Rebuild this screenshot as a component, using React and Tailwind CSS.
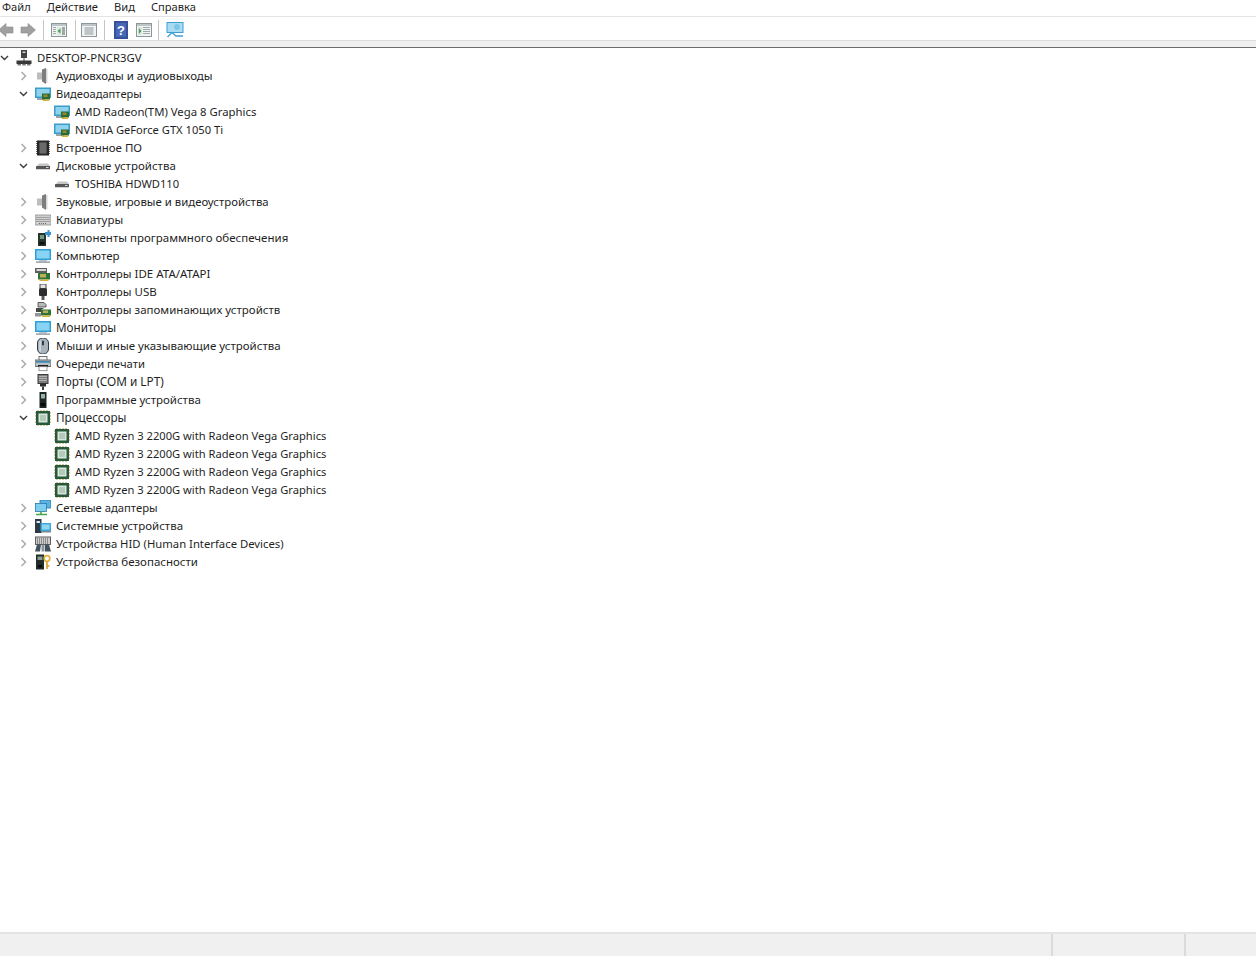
import React from "react";

const Chev = ({ open }) => (
  <svg width="10" height="10" viewBox="0 0 10 10" fill="none" stroke={open ? "#3c3c3c" : "#a6a6a6"} strokeWidth="1.4">
    {open ? <path d="M1 3 L4.5 6.5 L8 3" /> : <path d="M2.5 1 L6.5 5 L2.5 9" />}
  </svg>
);

const S = ({ children }) => <svg width="16" height="16" viewBox="0 0 16 16">{children}</svg>;

const Monitor = () => (
  <S>
    <rect x="0" y="1" width="16" height="11" fill="#2f9fd8" />
    <rect x="1.5" y="2.5" width="13" height="8" fill="#8ad4f3" />
    <rect x="4" y="12" width="8" height="1.5" fill="#b9c3c9" />
    <rect x="1" y="13.5" width="14" height="1.2" fill="#7c8990" />
  </S>
);
const Video = () => (
  <S>
    <rect x="0" y="1.5" width="16" height="10.5" fill="#3a9cc9" />
    <rect x="1.5" y="3" width="13" height="7.5" fill="#8fd2ee" />
    <rect x="2" y="12" width="8" height="2" fill="#9aa5ab" />
    <rect x="7" y="7.5" width="8" height="6" fill="#2d6b33" />
    <rect x="8.5" y="8.5" width="4" height="2.5" fill="#8f8a34" />
    <rect x="8" y="13.5" width="6" height="1.5" fill="#d9b233" />
  </S>
);
const Audio = () => (
  <S>
    <path d="M7 1.5 L11 0 V16 L7 13.5 Z" fill="#7d7d7d" />
    <path d="M2 4.5 H7 V11.5 H2 Z" fill="#bdbdbd" />
    <path d="M11 1 H12.5 V15 H11 Z" fill="#d6d6d6" />
  </S>
);
const Firmware = () => (
  <S>
    <rect x="2" y="0.5" width="12" height="15" fill="#262626" />
    <rect x="4.5" y="2.5" width="7" height="11" fill="#7b7b7b" />
    <path d="M4.5 4h7M4.5 6h7M4.5 8h7M4.5 10h7M4.5 12h7" stroke="#4c4c4c" strokeWidth=".7" />
    <path d="M1 1.5h1M1 3.5h1M1 5.5h1M1 7.5h1M1 9.5h1M1 11.5h1M1 13.5h1M14 1.5h1M14 3.5h1M14 5.5h1M14 7.5h1M14 9.5h1M14 11.5h1M14 13.5h1" stroke="#666" />
  </S>
);
const Disk = () => (
  <S>
    <path d="M2 8 L4 5.5 H13 L15 8 V11 H2 Z" fill="#c6c6c6" />
    <rect x="1" y="8" width="14" height="3.2" rx=".5" fill="#565656" />
    <rect x="11" y="9" width="2.5" height="1" fill="#d6d6d6" />
  </S>
);
const Keyboard = () => (
  <S>
    <rect x="0" y="3" width="16" height="10" fill="#cfcfcf" stroke="#8f8f8f" strokeWidth=".8" />
    <path d="M1.5 5.5h13M1.5 7.5h13M1.5 9.5h13M4 11.5h8" stroke="#707070" strokeDasharray="1 1" />
  </S>
);
const Software = () => (
  <S>
    <rect x="3" y="3" width="8" height="13" fill="#26352b" />
    <rect x="5" y="5" width="4" height="4" fill="#6f9a80" />
    <rect x="4.5" y="12" width="5" height="2.5" fill="#0d130f" />
    <path d="M10 2h2.5V0h2v2H16v3h-1.5v2h-2V5H10z" fill="#3a93cb" />
  </S>
);
const Ide = () => (
  <S>
    <rect x="0" y="2" width="12" height="5" fill="#5f5f5f" />
    <rect x="1.5" y="3" width="9.5" height="2" fill="#d8d8d8" />
    <rect x="3" y="7" width="12" height="6.5" fill="#2e7436" />
    <rect x="5" y="8" width="6" height="3.5" fill="#bcae5e" />
    <rect x="4.5" y="13.5" width="9" height="1.5" fill="#d9b233" />
  </S>
);
const Usb = () => (
  <S>
    <rect x="5" y="0" width="6" height="4.5" fill="#e3e3e3" stroke="#444" />
    <rect x="4" y="4.5" width="8" height="7.5" rx="1" fill="#2d2d2d" />
    <rect x="6.5" y="12" width="3" height="4" fill="#555" />
  </S>
);
const Storage = () => (
  <S>
    <path d="M3 0.5h6l2 2v2.5H3z" fill="#b8b8b8" stroke="#3f3f3f" strokeWidth=".8" />
    <path d="M1 6 H9 L6 8 H9 V10 H1 Z" fill="#454545" />
    <rect x="6" y="7.5" width="10" height="6" fill="#2e7436" />
    <rect x="8" y="8.5" width="5" height="2.5" fill="#bcae5e" />
    <rect x="7" y="13.5" width="8" height="1.5" fill="#d9b233" />
    <rect x="0" y="11" width="6" height="3.5" fill="#949494" />
  </S>
);
const Mouse = () => (
  <S>
    <rect x="2.5" y="0" width="11" height="16" rx="5" fill="#a8b3bb" stroke="#2f3a44" />
    <rect x="7" y="2.5" width="2" height="5" rx="1" fill="#303b44" />
    <rect x="4.5" y="2.5" width="1.2" height="11" fill="#e3e8eb" />
  </S>
);
const Printer = () => (
  <S>
    <rect x="4" y="0.5" width="8" height="4" fill="#f4f4f4" stroke="#555" strokeWidth=".8" />
    <rect x="0" y="4" width="16" height="6.5" fill="#b9bfc2" stroke="#505050" strokeWidth=".8" />
    <rect x="1" y="5" width="14" height="1.7" fill="#3a8abb" />
    <rect x="3" y="9" width="10" height="1.7" fill="#1f1f1f" />
    <rect x="4" y="10.7" width="8" height="4" fill="#fff" stroke="#808080" strokeWidth=".8" />
  </S>
);
const Port = () => (
  <S>
    <rect x="3" y="0.5" width="10" height="9" fill="#7d7d7d" stroke="#3d3d3d" />
    <path d="M4.5 2.5h7M4.5 4.5h7M4.5 6.5h7" stroke="#e8e8e8" strokeDasharray="1 1" />
    <rect x="5" y="9.5" width="6" height="3" fill="#2f2f2f" />
    <rect x="7" y="12.5" width="2" height="3.5" fill="#3f3f3f" />
  </S>
);
const Program = () => (
  <S>
    <rect x="4.5" y="0" width="7" height="16" fill="#1c2622" />
    <rect x="6" y="2" width="4" height="4.5" fill="#98b2a6" />
    <rect x="5.5" y="11" width="5" height="3" fill="#070a09" />
  </S>
);
const Cpu = () => (
  <S>
    <rect x="1" y="1" width="14" height="14" fill="#27593a" />
    <rect x="3.5" y="3.5" width="9" height="9" fill="#dbe7de" />
    <rect x="5" y="5" width="6" height="6" fill="#b3c9b9" />
    <path d="M0 3h1M0 6h1M0 9h1M0 12h1M15 3h1M15 6h1M15 9h1M15 12h1M3 0v1M6 0v1M9 0v1M12 0v1M3 15v1M6 15v1M9 15v1M12 15v1" stroke="#a8923a" />
  </S>
);
const Network = () => (
  <S>
    <rect x="5" y="0" width="11" height="8" fill="#57b4e2" stroke="#2c79a8" strokeWidth=".8" />
    <rect x="0.5" y="3.5" width="11" height="8" fill="#7dcdf1" stroke="#2c79a8" strokeWidth=".8" />
    <path d="M6 11.5 V14 M1 14.5 H12" stroke="#43a848" strokeWidth="1.6" />
  </S>
);
const System = () => (
  <S>
    <rect x="0" y="1" width="6.5" height="14" fill="#2c3c47" />
    <rect x="1.5" y="3" width="3.5" height="2" fill="#d3e6ef" />
    <rect x="5.5" y="5" width="10.5" height="8" fill="#3ea8dc" />
    <rect x="7" y="6.5" width="7.5" height="5" fill="#8fd6f3" />
    <rect x="6" y="13" width="10" height="1.5" fill="#7c8990" />
  </S>
);
const Hid = () => (
  <S>
    <rect x="0.5" y="1" width="15" height="7.5" fill="#cdcdcd" stroke="#5f5f5f" />
    <path d="M2 3h12M2 5h12M2 7h12" stroke="#4a4a4a" strokeDasharray="1 1" />
    <path d="M2 8.5 L0 15.5 H5 L6 8.5 Z M10 8.5 L10 15.5 H16 L14 8.5 Z" fill="#43525e" />
    <rect x="6.5" y="9" width="3" height="6.5" fill="#8a949b" />
  </S>
);
const Security = () => (
  <S>
    <rect x="1" y="0.5" width="8" height="15" fill="#212b28" />
    <rect x="2.5" y="2.5" width="5" height="3.5" fill="#88a096" />
    <rect x="3" y="11" width="4" height="2.5" fill="#080b0a" />
    <circle cx="12" cy="4.5" r="2.8" fill="none" stroke="#e2b23f" strokeWidth="1.7" />
    <path d="M12 7.5 V15 M12 12 H14.5" stroke="#d9a52c" strokeWidth="1.7" />
  </S>
);
const Computer = () => (
  <S>
    <rect x="5" y="0" width="6" height="8" fill="#434343" />
    <rect x="6.5" y="1.5" width="3" height="1.5" fill="#d0d0d0" />
    <rect x="7.5" y="8" width="1" height="3" fill="#4a4a4a" />
    <rect x="0.5" y="10.5" width="15" height="3.5" fill="#383838" />
    <rect x="1.5" y="14" width="3.5" height="1.5" fill="#7b7b7b" />
    <rect x="6.25" y="14" width="3.5" height="1.5" fill="#7b7b7b" />
    <rect x="11" y="14" width="3.5" height="1.5" fill="#7b7b7b" />
  </S>
);

const rows = [
  { d: 0, o: true, I: Computer, t: "DESKTOP-PNCR3GV", f: "text-[11.35px]" },
  { d: 1, o: false, I: Audio, t: "Аудиовходы и аудиовыходы" },
  { d: 1, o: true, I: Video, t: "Видеоадаптеры", f: "text-[11.1px]" },
  { d: 2, I: Video, t: "AMD Radeon(TM) Vega 8 Graphics", f: "text-[11.35px]" },
  { d: 2, I: Video, t: "NVIDIA GeForce GTX 1050 Ti", f: "text-[11.16px]" },
  { d: 1, o: false, I: Firmware, t: "Встроенное ПО" },
  { d: 1, o: true, I: Disk, t: "Дисковые устройства" },
  { d: 2, I: Disk, t: "TOSHIBA HDWD110", f: "text-[11.16px]" },
  { d: 1, o: false, I: Audio, t: "Звуковые, игровые и видеоустройства", f: "text-[11.4px]" },
  { d: 1, o: false, I: Keyboard, t: "Клавиатуры" },
  { d: 1, o: false, I: Software, t: "Компоненты программного обеспечения" },
  { d: 1, o: false, I: Monitor, t: "Компьютер" },
  { d: 1, o: false, I: Ide, t: "Контроллеры IDE ATA/ATAPI" },
  { d: 1, o: false, I: Usb, t: "Контроллеры USB" },
  { d: 1, o: false, I: Storage, t: "Контроллеры запоминающих устройств" },
  { d: 1, o: false, I: Monitor, t: "Мониторы", f: "text-[11.7px]" },
  { d: 1, o: false, I: Mouse, t: "Мыши и иные указывающие устройства" },
  { d: 1, o: false, I: Printer, t: "Очереди печати", f: "text-[11.25px]" },
  { d: 1, o: false, I: Port, t: "Порты (COM и LPT)", f: "text-[11.8px]" },
  { d: 1, o: false, I: Program, t: "Программные устройства" },
  { d: 1, o: true, I: Cpu, t: "Процессоры", f: "text-[11.7px]" },
  { d: 2, I: Cpu, t: "AMD Ryzen 3 2200G with Radeon Vega Graphics", f: "text-[11.16px]" },
  { d: 2, I: Cpu, t: "AMD Ryzen 3 2200G with Radeon Vega Graphics", f: "text-[11.16px]" },
  { d: 2, I: Cpu, t: "AMD Ryzen 3 2200G with Radeon Vega Graphics", f: "text-[11.16px]" },
  { d: 2, I: Cpu, t: "AMD Ryzen 3 2200G with Radeon Vega Graphics", f: "text-[11.16px]" },
  { d: 1, o: false, I: Network, t: "Сетевые адаптеры", f: "text-[11.27px]" },
  { d: 1, o: false, I: System, t: "Системные устройства" },
  { d: 1, o: false, I: Hid, t: "Устройства HID (Human Interface Devices)", f: "text-[11.3px]" },
  { d: 1, o: false, I: Security, t: "Устройства безопасности" },
];

const Sep = ({ className }) => <div className={"w-px h-[21px] bg-[#c6c6c6] " + className} />;

const Back = ({ flip }) => (
  <svg width="16" height="14" viewBox="0 0 16 14" className={flip ? "" : "-scale-x-100"}>
    <path d="M1 4 H8 V0.5 L15.5 7 L8 13.5 V10 H1 Z" fill="#a0a0a0" stroke="#8a8a8a" strokeWidth=".6" />
  </svg>
);
const Win = ({ children }) => (
  <svg width="16" height="16" viewBox="0 0 16 16">
    <rect x="0.5" y="1.5" width="15" height="13" fill="#f1f3f2" stroke="#8b979a" />
    <rect x="1" y="2" width="14" height="2" fill="#bcc5c8" />
    {children}
  </svg>
);

export default function App() {
  return (
    <div className="h-[956px] w-[1256px] flex flex-col bg-white text-[#1f1f1f] text-[11.5px] overflow-hidden font-['Noto_Sans','Open_Sans',sans-serif]">
      <div className="h-[17px] flex items-center gap-[16px] pl-[2px] pb-[2px] shrink-0 border-b border-[#e4e4e4] text-[11.15px]">
        <span>Файл</span>
        <span>Действие</span>
        <span>Вид</span>
        <span>Справка</span>
      </div>
      <div className="h-[23px] flex items-center shrink-0 pt-[3px]">
        <div className="flex items-center gap-[6px] -ml-[2px]">
          <Back />
          <Back flip />
        </div>
        <Sep className="ml-[7px]" />
        <div className="ml-[7px]">
          <Win>
            <path d="M2 5h3v1H2zM2 7h3v1H2zM2 9h3v1H2zM2 11h3v1H2zM11 5h3v8h-3z" fill="#9fa9ac" />
            <path d="M6 5h4.5v8H6z" fill="#d9ead9" />
            <path d="M9.5 6.5 L6.5 9 L9.5 11.5 Z" fill="#4e9a61" />
          </Win>
        </div>
        <Sep className="ml-[8px]" />
        <div className="ml-[5px]">
          <Win>
            <path d="M3.5 6h9M3.5 8h9M3.5 10h9M3.5 12h9" stroke="#8b979a" />
          </Win>
        </div>
        <Sep className="ml-[7px]" />
        <div className="ml-[9px]">
          <svg width="14" height="18" viewBox="0 0 14 18">
            <rect x="0" y="0" width="14" height="18" fill="#36509a" />
            <rect x="2" y="2" width="10" height="14" fill="#4767b7" />
            <text x="7" y="14" textAnchor="middle" fontSize="13" fontWeight="700" fill="#fff" fontFamily="Liberation Sans">?</text>
          </svg>
        </div>
        <div className="ml-[8px]">
          <Win>
            <path d="M2 5h4v8H2z" fill="#d9ead9" />
            <path d="M2.8 6 L5.5 9 L2.8 12 Z" fill="#4e9a61" />
            <path d="M7 5h7v1H7zM7 7h7v1H7zM7 9h7v1H7zM7 11h7v1H7z" fill="#9fa9ac" />
          </Win>
        </div>
        <Sep className="ml-[6px]" />
        <div className="ml-[7px]">
          <svg width="18" height="16" viewBox="0 0 18 16">
            <rect x="1" y="0.5" width="16" height="10" fill="#a9dcf3" stroke="#3f9fd4" />
            <circle cx="11" cy="5" r="3" fill="#7cc6ea" />
            <path d="M6 10.5 L1.500 15 M6 10.5 L10 14 H17" stroke="#3f9fd4" strokeWidth="1.3" fill="none" />
          </svg>
        </div>
      </div>
      <div className="h-[7px] shrink-0 bg-[#f0f0f0] border-t border-[#dcdcdc]" />
      <div className="h-px shrink-0 bg-[#6b6b6b]" />
      <div className="flex-1 pt-px min-h-0">
        {rows.map((r, i) => (
          <div key={i} className={"h-[18px] flex items-center whitespace-nowrap " + (r.f || "")}>
            <div className={r.d === 0 ? "w-0" : r.d === 1 ? "w-[19px] shrink-0" : "w-[38px] shrink-0"} />
            <div className="w-[10px] h-[10px] shrink-0 flex items-center justify-center">
              {r.o !== undefined && <Chev open={r.o} />}
            </div>
            <div className="shrink-0 ml-[6px]">
              <r.I />
            </div>
            <span className="ml-[5px]">{r.t}</span>
          </div>
        ))}
      </div>
      <div className="h-[24px] shrink-0 bg-[#f0f0f0] border-t-2 border-[#e4e4e4] flex justify-end">
        <div className="w-[133px] border-l-2 border-[#dadada]" />
        <div className="w-[72px] border-l-2 border-[#dadada]" />
      </div>
    </div>
  );
}
